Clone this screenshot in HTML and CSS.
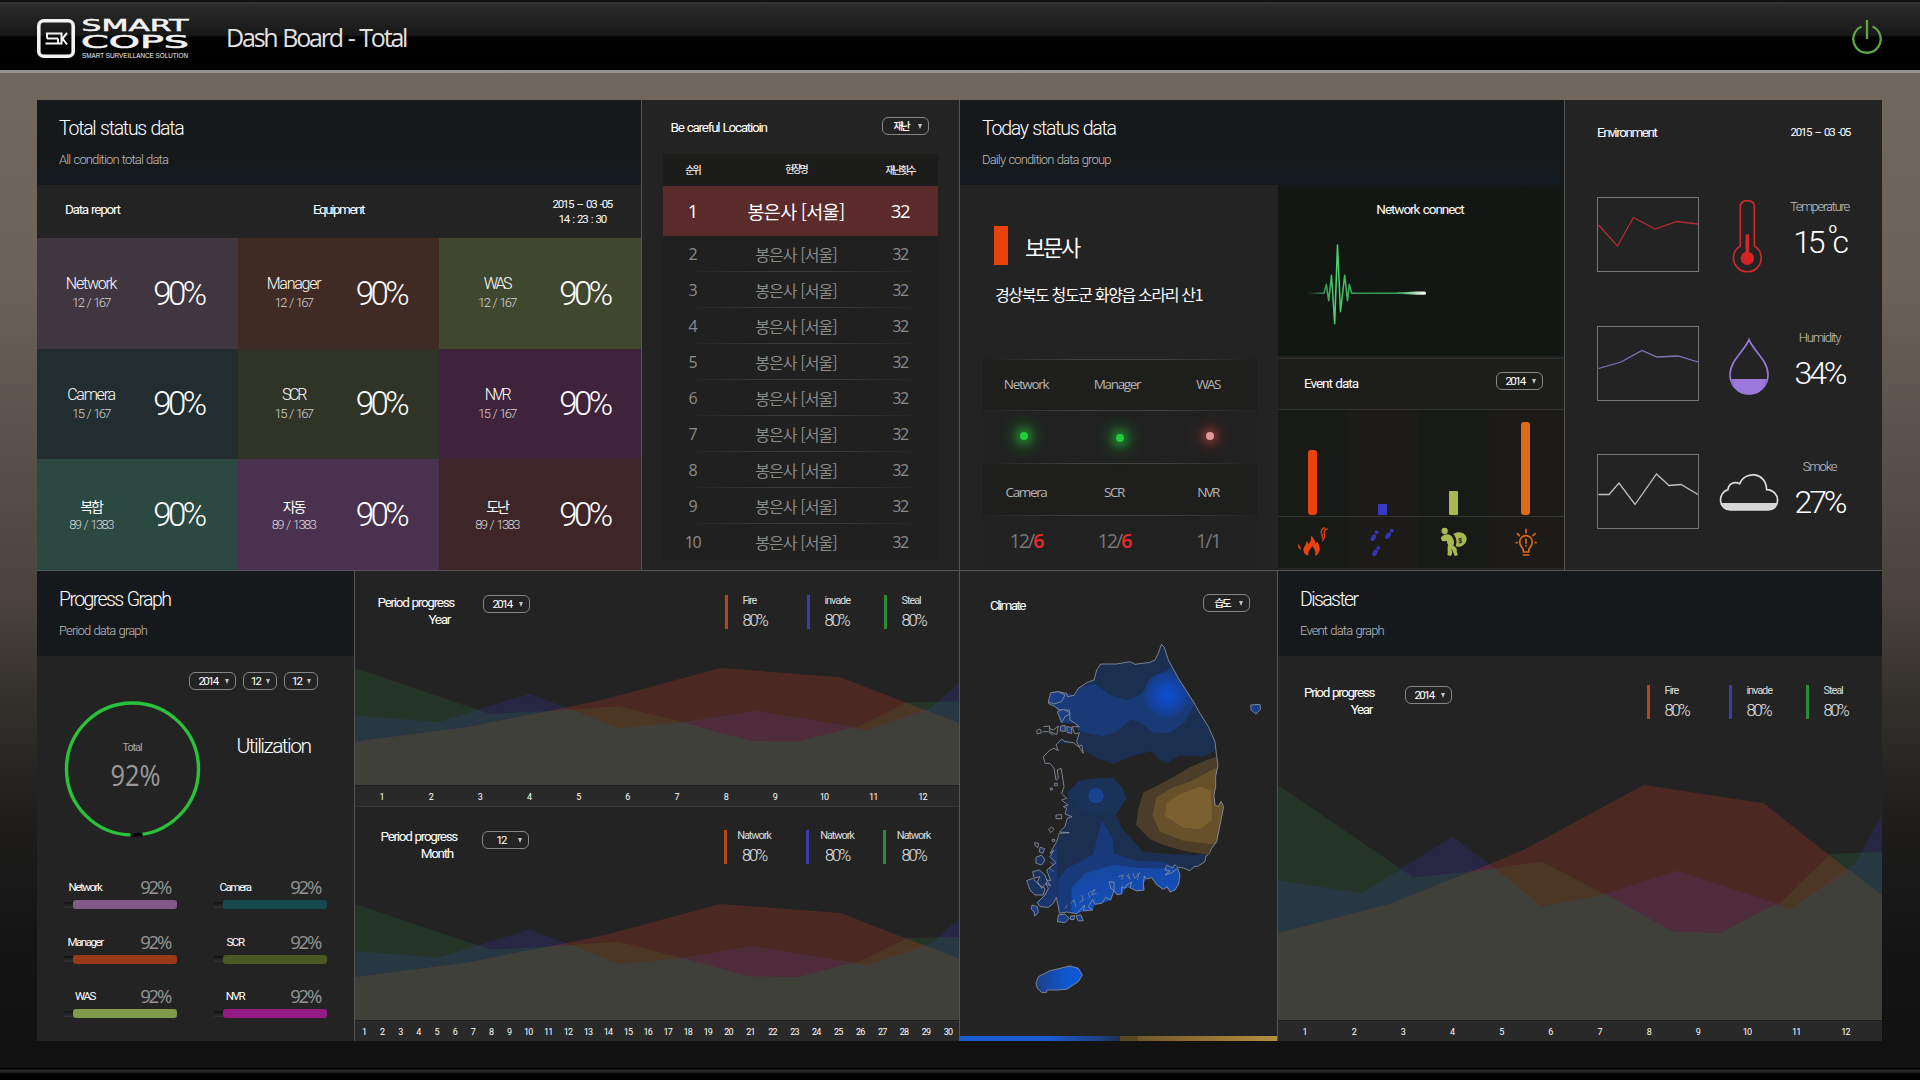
FILE: index.html
```html
<!DOCTYPE html>
<html lang="ko">
<head>
<meta charset="utf-8">
<title>Smart Cops - Dash Board</title>
<link rel="stylesheet" href="styles.css">
</head>
<body>
<header class="topbar">
  <svg class="logo" width="158" height="48" viewBox="0 0 158 48">
    <rect x="1.8" y="3.800" width="34.4" height="35.400" rx="5" fill="none" stroke="#f2f2f2" stroke-width="3.6"/>
    <path d="M9 16.500H24M10 21.500H21M8.500 26.500H23.500M10 16.500V21.500M21 21.500V26.500M24.500 15.500V27.500M30 16L25.500 21.500L30 27.500" fill="none" stroke="#f2f2f2" stroke-width="2"/>
    <text class="logo-a" x="44.500" y="13.500" textLength="107" lengthAdjust="spacingAndGlyphs">SMART</text>
    <text class="logo-b" x="44" y="31.200" textLength="108" lengthAdjust="spacingAndGlyphs">COPS</text>
    <text class="logo-c" x="45" y="41" textLength="106" lengthAdjust="spacingAndGlyphs">SMART SURVEILLANCE SOLUTION</text>
  </svg>
  <h1 class="page-title">Dash Board - Total</h1>
  <svg class="power" width="32" height="38" viewBox="-16 -20 32 38" fill="none" stroke="#5ea544" stroke-width="2.300">
    <path d="M-5.500 -12.500A13.700 13.700 0 1 0 5.500 -12.500M0 -19V0"/>
  </svg>
</header>

<main class="board">
  <div class="band">
    <section class="panel wide">
      <div class="head"><h2>Total status data</h2><p>All condition total data</p></div>
      <div class="report">
        <span class="lbl">Data report</span>
        <span class="lbl mid">Equipment</span>
        <span class="stamp">2015 – 03 -05<br>14 : 23 : 30</span>
      </div>
      <div class="tiles">
        <div class="tile t1"><div class="tl"><b>Network</b><i>12 / 167</i></div><strong>90%</strong></div>
        <div class="tile t2"><div class="tl"><b>Manager</b><i>12 / 167</i></div><strong>90%</strong></div>
        <div class="tile t3"><div class="tl"><b class="abbr">WAS</b><i>12 / 167</i></div><strong>90%</strong></div>
        <div class="tile t4"><div class="tl"><b>Camera</b><i>15 / 167</i></div><strong>90%</strong></div>
        <div class="tile t5"><div class="tl"><b class="abbr">SCR</b><i>15 / 167</i></div><strong>90%</strong></div>
        <div class="tile t6"><div class="tl"><b class="abbr">NVR</b><i>15 / 167</i></div><strong>90%</strong></div>
        <div class="tile t7"><div class="tl"><b class="ko">복합</b><i>89 / 1383</i></div><strong>90%</strong></div>
        <div class="tile t8"><div class="tl"><b class="ko">자동</b><i>89 / 1383</i></div><strong>90%</strong></div>
        <div class="tile t9"><div class="tl"><b class="ko">도난</b><i>89 / 1383</i></div><strong>90%</strong></div>
      </div>
    </section>

    <section class="panel narrow rank">
      <div class="rank-head"><span class="lbl careful">Be careful Locatioin</span><span class="select"><em class="ko">재난</em></span></div>
      <div class="table">
        <div class="tr th"><span>순위</span><span>현장명</span><span>재난횟수</span></div>
        <div class="tr top"><span>1</span><span>봉은사 [서울]</span><span>32</span></div>
        <div class="tr"><span>2</span><span>봉은사 [서울]</span><span>32</span></div>
        <div class="tr"><span>3</span><span>봉은사 [서울]</span><span>32</span></div>
        <div class="tr"><span>4</span><span>봉은사 [서울]</span><span>32</span></div>
        <div class="tr"><span>5</span><span>봉은사 [서울]</span><span>32</span></div>
        <div class="tr"><span>6</span><span>봉은사 [서울]</span><span>32</span></div>
        <div class="tr"><span>7</span><span>봉은사 [서울]</span><span>32</span></div>
        <div class="tr"><span>8</span><span>봉은사 [서울]</span><span>32</span></div>
        <div class="tr"><span>9</span><span>봉은사 [서울]</span><span>32</span></div>
        <div class="tr last"><span>10</span><span>봉은사 [서울]</span><span>32</span></div>
      </div>
    </section>

    <section class="panel wide">
      <div class="head"><h2>Today status data</h2><p class="loose">Daily condition data group</p></div>
      <div class="today">
        <div class="site">
          <div class="site-name"><span class="flag"></span><b>보문사</b></div>
          <p class="address">경상북도 청도군 화양읍 소라리 산1</p>
          <div class="devices">
            <div class="dr dh h1"><span>Network</span><span>Manager</span><span>WAS</span></div>
            <div class="dr h2"><span><u class="dot"></u></span><span><u class="dot low"></u></span><span><u class="dot red"></u></span></div>
            <div class="dr dh h3"><span>Camera</span><span>SCR</span><span>NVR</span></div>
            <div class="dr dv h4"><span>12/<b>6</b></span><span>12/<b>6</b></span><span>1/1</span></div>
          </div>
        </div>
        <div class="events">
          <div class="pulse">
            <span class="lbl net">Network connect</span>
            <svg width="286" height="130" viewBox="24 123 858 390">
              <defs><linearGradient id="trace" gradientUnits="userSpaceOnUse" x1="108" y1="0" x2="467" y2="0">
                <stop offset="0" stop-color="#1c6b34" stop-opacity="0"/><stop offset=".15" stop-color="#2f9c50"/><stop offset=".25" stop-color="#4fd873"/><stop offset=".42" stop-color="#2f9c50"/><stop offset=".78" stop-color="#35a458"/><stop offset="1" stop-color="#fff"/></linearGradient></defs>
              <path d="M108 339.500H162L169 313L176 362L184.500 286L194 431L202.500 195L211.500 395L224 286L232.500 362L238 313L245 339.500H400" fill="none" stroke="url(#trace)" stroke-width="4.500" stroke-linejoin="round"/>
              <path d="M380 337.500L440 334.500H463Q468 335 468 339.500T463 344.500H440L380 341.500Z" fill="url(#trace)"/>
            </svg>
          </div>
          <div class="event-head"><span class="lbl">Event data</span><span class="select"><em>2014</em></span></div>
          <div class="cols">
            <div class="col"><span class="bar fire"></span></div>
            <div class="col alt"><span class="bar step"></span></div>
            <div class="col"><span class="bar thief"></span></div>
            <div class="col alt"><span class="bar lamp"></span></div>
          </div>
          <div class="icons">
            <div class="col"><svg width="32" height="32" viewBox="82 1038 96 96" fill="#e8430f">
              <path d="M112 1126C100 1120 99 1107 105 1098C108 1093 111 1091 110 1084C115 1086 117 1090 117 1093C122 1086 126 1078 123 1067C133 1073 137 1084 138 1092C140 1090 141 1087 141 1084C150 1095 156 1113 142 1125C138 1129 136 1126 137 1122C139 1114 133 1104 127 1097C126 1106 117 1108 116 1119C116 1124 117 1128 112 1126Z"/>
              <path d="M174 1047C164 1047 163 1053 164 1061C165 1070 163 1078 158 1083M166 1043C156 1045 153 1053 156 1061C158 1067 159 1071 158 1076" fill="none" stroke="#e8430f" stroke-width="4"/>
              <path d="M85 1090C87 1098 95 1100 93 1110C86 1107 83 1098 85 1090Z"/></svg></div>
            <div class="col alt"><svg width="32" height="32" viewBox="298 1038 96 96" fill="#3434b4">
              <g id="foot"><ellipse cx="317" cy="1073" rx="7" ry="11" transform="rotate(32 317 1073)"/><circle cx="327" cy="1057" r="6"/></g>
              <g transform="translate(44 -6)"><ellipse cx="317" cy="1073" rx="7" ry="11" transform="rotate(40 317 1073)"/><circle cx="328" cy="1058" r="6"/></g>
              <g transform="translate(5 46)"><ellipse cx="317" cy="1072" rx="7" ry="11" transform="rotate(32 317 1072)"/><circle cx="327" cy="1058" r="6"/></g></svg></div>
            <div class="col"><svg width="32" height="32" viewBox="511 1038 96 96" fill="#a9b94f">
              <circle cx="531" cy="1053" r="9.500"/>
              <path d="M519 1074C526 1062 540 1060 549 1066C558 1074 562 1088 557 1097C566 1102 570 1108 567 1115L571 1126L561 1128C557 1118 556 1110 550 1106C554 1113 556 1120 549 1128L539 1125C542 1117 538 1104 541 1094C538 1090 538 1086 538 1083L524 1084Z"/>
              <path d="M557 1062C574 1050 598 1060 597 1077C596 1094 577 1106 564 1098C569 1086 566 1072 557 1062Z"/>
              <text class="cash" x="572" y="1088">$</text></svg></div>
            <div class="col alt"><svg width="32" height="32" viewBox="721 1038 96 96" fill="none" stroke="#df6a17" stroke-width="5" stroke-linecap="round">
              <path d="M761 1116V1110C759 1102 750 1098 750 1086A19 19 0 0 1 788 1086C788 1098 779 1102 777 1110V1116ZM761 1125H777M769 1078V1090M769 1097V1098M769 1048V1058M743 1061L749 1067M796 1061L790 1067M740 1088H742M797 1088H799"/></svg></div>
          </div>
        </div>
      </div>
    </section>

    <section class="panel env">
      <div class="env-head"><span class="lbl envl">Environment</span><span class="stamp">2015 – 03 -05</span></div>
      <div class="env-row">
        <svg class="spark" width="102" height="75" viewBox="0 0 102 75" fill="none"><rect x=".5" y=".5" width="101" height="74" stroke="#777"/><path d="M1.500 28L20.500 49L36.500 20.500L58 32L80 24.500L101 27" stroke="#b52c32" stroke-width="1.300"/></svg>
        <svg width="60" height="76" viewBox="477 318 180 228" fill="none" stroke="#cc2a2d" stroke-width="5">
          <path d="M541 465V348Q541 329 562 329T583 348V465A41.500 41.500 0 1 1 541 465Z"/><path d="M562 430V500" stroke-width="11"/><circle cx="562" cy="502" r="20" fill="#d42428" stroke="none"/></svg>
        <div class="reading r1"><i>Temperature</i><strong>15<span class="unit"><sup>o</sup>c</span></strong></div>
      </div>
      <div class="env-row">
        <svg class="spark" width="102" height="75" viewBox="0 0 102 75" fill="none"><rect x=".5" y=".5" width="101" height="74" stroke="#777"/><path d="M1.500 42.500L24 36L45 24.500L60 31L81 30L101 36" stroke="#8573c0" stroke-width="1.300"/></svg>
        <svg width="60" height="76" viewBox="477 702 180 228">
          <path d="M515 861H619C615 889 595 907 567 907S519 889 515 861Z" fill="#9a78dc"/>
          <path d="M567 743C555 775 510 805 510 848A57 58 0 0 0 624 848C624 805 579 775 567 743Z" fill="none" stroke="#9a78dc" stroke-width="5"/></svg>
        <div class="reading r2"><i>Humidity</i><strong>34%</strong></div>
      </div>
      <div class="env-row">
        <svg class="spark" width="102" height="75" viewBox="0 0 102 75" fill="none"><rect x=".5" y=".5" width="101" height="74" stroke="#777"/><path d="M1.500 40.500H12L22 29L38 50.500L59.500 20L72 31.500L84 30.500L101 40.500" stroke="#c4c4c4" stroke-width="1.300"/></svg>
        <svg width="60" height="76" viewBox="477 1089 180 228">
          <path d="M483 1236H652Q645 1257 624 1257H512Q488 1257 483 1236Z" fill="#d6d6d6"/>
          <path d="M512 1257C474 1257 472 1205 504 1196C505 1178 522 1170 539 1178C553 1140 618 1140 620 1196C664 1198 662 1257 624 1257Z" fill="none" stroke="#dcdcdc" stroke-width="5"/></svg>
        <div class="reading r3"><i>Smoke</i><strong>27%</strong></div>
      </div>
    </section>
  </div>

  <div class="band low">
    <section class="panel narrow">
      <div class="head"><h2 class="tight">Progress Graph</h2><p>Period data graph</p></div>
      <div class="pick"><span class="select"><em>2014</em></span><span class="select small"><em>12</em></span><span class="select small"><em>12</em></span></div>
      <div class="util">
        <svg width="138" height="138" viewBox="0 0 138 138" fill="none">
          <circle cx="68.500" cy="69" r="66" stroke="#2ac23a" stroke-width="3.400"/>
          <path d="M66.500 135A66 66 0 0 0 78.500 134.300" stroke="#050505" stroke-width="3.800"/>
          <text class="ring-l" x="68" y="51" text-anchor="middle">Total</text>
          <text class="ring-v" x="46.500" y="86" textLength="50" lengthAdjust="spacingAndGlyphs">92%</text>
        </svg>
        <b>Utilization</b>
      </div>
      <div class="meters">
        <div class="meter m1"><i>Network</i><b>92%</b><u></u></div>
        <div class="meter m2"><i>Camera</i><b>92%</b><u></u></div>
        <div class="meter m3"><i>Manager</i><b>92%</b><u></u></div>
        <div class="meter m4"><i>SCR</i><b>92%</b><u></u></div>
        <div class="meter m5"><i>WAS</i><b>92%</b><u></u></div>
        <div class="meter m6"><i>NVR</i><b>92%</b><u></u></div>
      </div>
    </section>

    <section class="panel wide">
      <div class="trend year">
        <div class="trend-head">
          <div class="caption">Period progress<span>Year</span></div><span class="select"><em>2014</em></span>
          <div class="legend"><div class="k1"><i>Fire</i><b>80%</b></div><div class="k2"><i>invade</i><b>80%</b></div><div class="k3"><i>Steal</i><b>80%</b></div></div>
        </div>
        <svg class="area" viewBox="0 0 1456 705" preserveAspectRatio="none">
          <defs><g id="waves">
            <path d="M0 285L201 325L421 155L521 250L636 365L781 330L961 257L1196 353L1231 375L1391 235L1456 90V705H0Z" fill="rgba(60,60,220,.18)"/>
            <path d="M0 0L326 277L461 260L636 230L781 323L951 440L1066 445L1211 355L1331 207L1456 200V705H0Z" fill="rgba(40,140,60,.17)"/>
            <path d="M0 445L270 357L400 292L511 237L600 190L881 0L1171 55L1325 207L1456 332V705H0Z" fill="rgba(220,65,30,.22)"/>
            <path d="M0 445L270 357L400 292L461 263L521 250L636 365L790 328L951 440L1066 445L1196 360L1231 375L1381 257L1456 332V705H0Z" fill="#40403b"/>
          </g></defs>
          <use href="#waves"/>
        </svg>
        <div class="axis months"><span>1</span><span>2</span><span>3</span><span>4</span><span>5</span><span>6</span><span>7</span><span>8</span><span>9</span><span>10</span><span>11</span><span>12</span></div>
      </div>
      <div class="trend month">
        <div class="trend-head">
          <div class="caption">Period progress<span>Month</span></div><span class="select"><em>12</em></span>
          <div class="legend centred"><div class="k1"><i>Natwork</i><b>80%</b></div><div class="k2"><i>Natwork</i><b>80%</b></div><div class="k3"><i>Natwork</i><b>80%</b></div></div>
        </div>
        <svg class="area" viewBox="0 0 1456 705" preserveAspectRatio="none"><use href="#waves"/></svg>
        <div class="axis days"><span>1</span><span>2</span><span>3</span><span>4</span><span>5</span><span>6</span><span>7</span><span>8</span><span>9</span><span>10</span><span>11</span><span>12</span><span>13</span><span>14</span><span>15</span><span>16</span><span>17</span><span>18</span><span>19</span><span>20</span><span>21</span><span>22</span><span>23</span><span>24</span><span>25</span><span>26</span><span>27</span><span>28</span><span>29</span><span>30</span></div>
      </div>
    </section>

    <section class="panel narrow climate">
      <div class="climate-head"><span class="lbl clim">Climate</span><span class="select"><em class="ko">습도</em></span></div>
      <svg class="map" width="317" height="422" viewBox="30 159 951 1266">
        <defs>
          <clipPath id="land"><path d="M634 253L643 262L655 300L685 355L730 425L750 460L775 500L795 545L800 590L804 615L797 650L797 680L792 705L795 735L805 740L813 724L821 740L812 785L800 845L785 865L770 885L765 905L745 918L720 932L700 924L683 922L690 945L686 972L675 990L660 996L650 984L635 986L620 974L605 953L590 955L580 970L582 990L560 993L540 983L525 985L515 1002L500 1004L492 992L482 1020L455 1030L435 1033L428 1050L400 1053L380 1061L350 1056L328 1060L325 1040L319 1012L310 1030L295 1042L270 1040L258 1028L285 1005L295 985L285 968L302 962L290 930L312 922L300 890L312 870L320 845L345 800L352 775L345 740L350 715L335 700L342 680L336 640L318 660L312 625L300 610L283 607L285 585L300 570L305 555L340 540L370 548L400 572L380 545L388 518L375 490L345 490L330 485L325 455L315 440L295 430L305 400L325 395L350 400L372 406L385 385L410 368L432 360L440 330L452 312L500 312L540 305L555 313L600 307L615 300L625 280Z"/></clipPath>
          <radialGradient id="peak"><stop offset="0" stop-color="#0a50d4"/><stop offset=".35" stop-color="#1049bd"/><stop offset="1" stop-color="#173c85"/></radialGradient>
          <linearGradient id="isle"><stop offset="0" stop-color="#1d3f86"/><stop offset=".7" stop-color="#0f58d4"/></linearGradient>
          <linearGradient id="south" x1="0" y1="0" x2=".4" y2="1"><stop offset="0" stop-color="#18479a"/><stop offset="1" stop-color="#1150c4"/></linearGradient>
        </defs>
        <g clip-path="url(#land)">
          <path d="M280 240H820V545L790 575L760 590L690 586L650 610L625 598L605 574L545 588L490 612L440 595L405 572L385 550H300V500H280Z" fill="#1b2f50"/>
          <path d="M280 400L435 372L480 405L530 420L570 405L600 370L625 345L665 322L735 430L705 485L660 518L610 518L575 490L545 478L500 515L460 529L410 520L350 495L280 500Z" fill="#193a76"/>
          <circle cx="650" cy="405" r="68" fill="url(#peak)"/>
          <path d="M345 730L362 690L385 664L430 656L490 653L515 680L529 715L497 765L520 810L580 875L660 882L770 885V1080H240V770Z" fill="#1b2f50"/>
          <path d="M350 700L385 664L430 656L490 653L515 680L529 715L497 765L400 760Z" fill="#1a3158"/>
          <circle cx="438" cy="707" r="23" fill="#194491"/>
          <path d="M455 780L487 835L492 882L560 902L640 905L720 940V1080H325V960L350 925L390 905L430 883L442 835Z" fill="#193a7a"/>
          <path d="M365 1080V985L405 940L490 915L570 925L690 925V1080Z" fill="url(#south)"/>
          <path d="M225 860H320L325 1070H225Z" fill="#19397a" opacity=".7"/>
          <path d="M810 588L770 600L720 622L650 662L580 698L565 745L558 795L600 838L640 855L700 872L770 884H840V588Z" fill="#4b3d29"/>
          <path d="M810 622L790 628L720 665L670 682L620 712L607 765L630 815L700 842L800 854L840 840V622Z" fill="#67512b"/>
          <path d="M750 680L783 692L786 780L750 808L700 803L645 768L650 728L690 703Z" fill="#7b6130"/>
        </g>
        <g fill="none" stroke="#8d93a2" stroke-width="2.500" stroke-linejoin="round">
          <path d="M634 253L643 262L655 300L685 355L730 425L750 460L775 500L795 545L800 590L804 615L797 650L797 680L792 705L795 735L805 740L813 724L821 740L812 785L800 845L785 865L778 880L768 888L765 905L745 918L732 920L720 932L700 924L683 922L674 914L668 924L650 916L645 930L660 932L645 945L665 938L683 925L690 945L686 972L675 990L660 996L652 980L640 988L620 974L605 953L590 957L583 948L580 970L582 990L560 993L540 983L545 966L530 975L525 985L515 980L515 1002L500 1004L492 992V966L478 965L482 985L492 992L482 1020L468 1012L455 1030L435 1033L428 1018L415 1040L428 1050L400 1053L404 1035L380 1061L350 1056L328 1060L325 1040L319 1012L310 1030L295 1042L270 1040L262 1028L285 1005L295 985L285 968L302 978L290 960L302 962L290 930L318 908L300 890L312 870L300 880L320 845L328 820L358 818L328 816L345 800L352 775L366 770L345 762L350 745L340 740L354 735L335 720L350 715L335 700L342 680L336 640L333 625L322 630L325 655L318 660L312 625L300 610L285 610L280 590L300 570L312 565L325 572L318 555L335 537L345 545L370 548L385 560L395 555L400 580L390 565L380 545L388 518L375 522L366 500L388 500L375 490L360 480L358 450L330 450L315 440L295 430L305 400L325 395L350 400L352 410L372 406L385 385L410 368L432 360L440 330L452 312L500 312L540 305L555 313L600 307L615 300L625 280Z"/>
          <path d="M505 950L520 945L515 960M530 945L540 958L535 940M548 940L555 955L568 938L562 960M420 1015L415 1000L435 988L425 1005L440 1000M362 1030L372 1020L378 1040M395 1005L400 1020L388 1028M345 1045L352 1035M300 905L310 915L298 925L312 935" stroke-width="2"/>
          <g fill="#193f86">
            <path d="M322 455L340 448L362 460L345 470L335 488ZM302 398L325 395L345 405L335 425L312 432L295 425ZM332 498L345 496L346 514L331 513ZM350 500L364 502L366 520L352 518Z"/>
            <path d="M325 1065L345 1062L358 1075L345 1088L322 1085ZM378 1068L392 1064L400 1082L385 1083ZM362 1068L374 1067L372 1079L361 1078ZM246 1035L262 1040L265 1058L254 1068L252 1055L244 1048Z"/>
            <path d="M258 892L275 885L285 900L275 915L258 910ZM248 935L268 930L285 945L292 965L275 985L262 965L270 950L252 955ZM230 962L248 955L268 975L285 985L280 1005L255 1005L240 990ZM270 862L284 866L278 880L268 876Z" fill="#1a3260"/>
            <path d="M902 435L930 433L932 448L918 462L903 450Z"/>
          </g>
          <path d="M260 512L270 507L275 518L262 522ZM280 500L298 498L300 515L320 524L325 498L310 510L298 505M278 515L295 515L310 526M254 848L266 850L264 862L256 858ZM318 765L335 764V776H318ZM296 808L305 801L312 808L302 818ZM301 684H307V690H301ZM314 670H322V677H314ZM307 838H314V844H307Z"/>
          <path d="M258 1270L265 1250L300 1232L360 1218L385 1225L397 1245L385 1265L350 1288L320 1290L292 1290L288 1298L275 1297L262 1285Z" fill="url(#isle)"/>
        </g>
      </svg>
      <div class="scale"></div>
    </section>

    <section class="panel disaster">
      <div class="head"><h2 class="tight">Disaster</h2><p>Event data graph</p></div>
      <div class="trend">
        <div class="trend-head">
          <div class="caption">Priod progress<span>Year</span></div><span class="select"><em>2014</em></span>
          <div class="legend"><div class="k1"><i>Fire</i><b>80%</b></div><div class="k2"><i>invade</i><b>80%</b></div><div class="k3"><i>Steal</i><b>80%</b></div></div>
        </div>
        <svg class="area" viewBox="0 0 1456 705" preserveAspectRatio="none"><use href="#waves"/></svg>
        <div class="axis months"><span>1</span><span>2</span><span>3</span><span>4</span><span>5</span><span>6</span><span>7</span><span>8</span><span>9</span><span>10</span><span>11</span><span>12</span></div>
      </div>
    </section>
  </div>
</main>
<footer class="foot"></footer>
</body>
</html>
```
FILE: styles.css
```css
*{box-sizing:border-box;margin:0;padding:0}
b,i,em,u,strong,h1,h2{font-weight:inherit;font-style:normal;text-decoration:none}
body{
  width:1920px;height:1080px;overflow:hidden;display:flex;flex-direction:column;
  background:#111 linear-gradient(#70675f 73px,#6c625a 280px,#5c534c 420px,#4a433d 600px,#33302c 700px,#1d1c1b 830px,#141414 950px,#111 1068px);
  color:#fff;font-family:Roboto,"Noto Sans CJK KR",sans-serif;font-weight:300;
}
svg{display:block;flex:none}
.ko{font-family:"Noto Sans CJK KR",sans-serif}

/* top bar */
.topbar{
  height:73px;flex:none;display:flex;align-items:flex-start;padding:17px 37px 0;
  border-bottom:3px solid #96928f;
  background:linear-gradient(#111 0,#111 2px,#3a3a3a 2px,#2b2b2b 5px,#181818 35px,#020202 37px,#000 70px);
}
.logo text{fill:#f2f2f2}
.logo-a{font:400 15.500px "DejaVu Sans",sans-serif;stroke:#f2f2f2;stroke-width:.500px}
.logo-b{font:400 18.500px "DejaVu Sans",sans-serif;stroke:#f2f2f2;stroke-width:.600px}
.logo-c{font:400 7.200px "Liberation Sans",sans-serif}
.page-title{font:400 25px/30px "Open Sans",sans-serif;letter-spacing:-2.200px;word-spacing:1.500px;color:#e2e2e2;margin:5px 0 0 31px;white-space:nowrap}
.power{margin:2px 0 0 auto}

/* board */
.board{width:1845px;height:941px;margin:27px 0 0 37px;flex:none}
.band{display:flex;height:471px;border-bottom:1px solid #555}
.band.low{height:470px;border-bottom:0}
.panel{background:#232323;border-right:1px solid #555;flex:none;display:flex;flex-direction:column}
.wide{width:605px}
.narrow{width:318px}
.env{width:317px;border-right:0}
.disaster{width:604px;border-right:0}
.head{height:85px;flex:none;padding:17px 0 0 22px;background:linear-gradient(#16191b 70%,#131a20)}
.low .head{background:#16191b}
.head h2{font-size:19.500px;line-height:24px;letter-spacing:-1.250px;font-weight:350;word-spacing:1px}
.head h2.tight{letter-spacing:-1.600px}
.head p{font-size:13px;line-height:18px;margin-top:10px;letter-spacing:-.850px;word-spacing:.800px;color:#bdbdbd}
.lbl{font-size:13.500px;line-height:18px;letter-spacing:-1.250px;word-spacing:1px;font-weight:400;white-space:nowrap}
.stamp{font-size:11.500px;line-height:15px;letter-spacing:-1.300px;word-spacing:1.800px;font-weight:400;text-align:center;white-space:pre-line}

.select{
  width:47px;height:18px;flex:none;border:1px solid #868686;border-radius:6px;
  display:flex;align-items:center;padding:0 6px 0 1px;
}
.select.small{width:34px}
.select em{flex:1;text-align:center;font-size:11.500px;line-height:16px;letter-spacing:-1.700px;font-weight:400}
.select em.ko{font-size:10.500px;letter-spacing:-2.200px;font-weight:500;padding-bottom:1px}
.select::after{content:"";border:2.500px solid transparent;border-top:5px solid #c4c4c4;border-bottom:0}

/* total status */
.report{height:53px;display:grid;grid-template-columns:201px 201px 1fr;padding:12px 29px 0 0;flex:none}
.report .lbl{padding-left:28px;padding-top:3px}
.report .mid{padding-left:0;text-align:center;letter-spacing:-1.500px}
.report .stamp{justify-self:end}
.tiles{flex:1;display:grid;grid-template-columns:201px 201px 1fr;grid-template-rows:repeat(3,1fr)}
.tile{display:flex;align-items:center;padding-top:1px}
.tile:nth-child(3n+2){padding-left:1.500px}
.tile:nth-child(3n){padding-left:4px}
.tl{width:108px;text-align:center;display:flex;flex-direction:column}
.tl b{font-size:16px;line-height:20px;letter-spacing:-1.250px;font-weight:350}
.tl b.abbr{letter-spacing:-2.300px}
.tl b.ko{font-size:14px;letter-spacing:-2.200px;font-weight:400}
.tl i{font-size:13px;line-height:20px;letter-spacing:-1.600px;word-spacing:1.600px;color:#d8d7d7;margin-top:-1px}
.tile strong{width:70px;text-align:center;font-size:33px;line-height:36px;letter-spacing:-3.500px;padding-right:3px;white-space:nowrap}
.t1{background:#3f3640}.t2{background:#402a24}.t3{background:#40472f}
.t4{background:#212d2e}.t5{background:#2f3426}.t6{background:#3f223b}
.t7{background:#2b4841}.t8{background:#4b3150}.t9{background:#3e2528}

/* ranking */
.rank-head{display:flex;justify-content:space-between;padding:17px 30px 0 28.500px}
.rank-head .lbl{padding-top:1px}
.table{margin:18px 0 0 21px;width:275px}
.tr{
  display:grid;grid-template-columns:59px 148px 60px;align-items:center;text-align:center;height:36px;
  font:400 16px/24px "Open Sans","Noto Sans CJK KR",sans-serif;color:#8c8c8c;letter-spacing:-1.300px;
  background:#202020 linear-gradient(90deg,transparent 8%,#3b3b3b 40%,#3b3b3b 60%,transparent 95%) bottom/100% 1px no-repeat;
}
.tr span:nth-child(2){font-family:"Noto Sans CJK KR",sans-serif;letter-spacing:-.900px;line-height:20px;padding-bottom:1px;white-space:nowrap}
.tr.last{background-image:none}
.tr.th{height:32px;background:#1c1d1b;color:#eee;font:500 10px/20px "Noto Sans CJK KR",sans-serif;letter-spacing:-1.900px;padding-bottom:1px}
.tr.th span:nth-child(2){letter-spacing:-2px}
.tr.top{height:50px;background:#5b2a2a;color:#fff;font-size:18.500px}
.tr.top span:nth-child(2){letter-spacing:-.750px;font-weight:400}

/* today */
.today{display:flex;flex:1}
.site{width:318px;padding:41px 0 0 23px}
.site-name{display:flex;align-items:center;padding-left:11px}
.flag{width:14px;height:39px;background:#e8430b}
.site-name b{font:400 22px/30px "Noto Sans CJK KR",sans-serif;letter-spacing:-2.300px;margin-left:17px}
.address{font:400 16px/24px "Noto Sans CJK KR",sans-serif;letter-spacing:-1.350px;margin:17px 0 0 12px;white-space:nowrap}
.devices{width:274px;margin-top:53px}
.dr{
  display:grid;grid-template-columns:86px 96px 86px;align-items:center;justify-items:center;
  background:#212121 linear-gradient(90deg,transparent,#444 35%,#444 65%,transparent) top/100% 1px no-repeat;
}
.dh{background-color:#1e1e1d;font:400 13.500px/20px "Open Sans",sans-serif;letter-spacing:-1.350px;color:#b5b5b5}
.dh span:last-child{letter-spacing:-1.700px}
.h1{height:51px;padding-bottom:1px}.h2{height:53px}.h3{height:52px;padding-top:5px}.h4{height:53px}
.h3 span:nth-child(2),.h4 span:nth-child(2){margin-left:-6px}
.dv{font:400 19.500px/24px "Open Sans",sans-serif;letter-spacing:-1.870px;color:#777;padding-bottom:1px}
.dv b{color:#ea2a2e;font-weight:600}
.dot{display:block;width:8px;height:8px;margin:-1px 0 0 -5px;border-radius:50%;background:#22cc3c;box-shadow:0 0 7px 5px rgba(32,130,46,.75),0 0 14px 11px rgba(30,100,38,.42)}
.dot.low{margin:2px 0 0 6px}
.dot.red{background:#e0989a;margin:-1px 0 0 4px;box-shadow:0 0 7px 4px rgba(130,55,55,.75),0 0 13px 9px rgba(100,42,42,.4)}
.events{width:286px;display:flex;flex-direction:column}
.pulse{height:171px;background:#131713;text-align:center;padding:15px 2px 0 0}
.pulse .net{display:block;letter-spacing:-1.050px;height:21px}
.event-head{height:52px;margin-top:2px;padding:13px 21px 0 26px;display:flex;justify-content:space-between;background:#1d1e1c;border-top:1px solid #2e2f2c;border-bottom:1px solid #33342e}
.event-head .lbl{padding-top:2px;letter-spacing:-1px}
.cols,.icons{display:grid;grid-template-columns:69px 71px 71px 1fr}
.cols{height:107px;border-bottom:1px solid #33352f}
.icons{height:51px}
.col{display:flex;justify-content:center;align-items:flex-end;background:#171a15}
.col.alt{background:#1c1b17}
.col:last-child{padding-right:2px}
.cols .col{padding-bottom:1px}
.icons .col{align-items:center;padding-bottom:1px}
.bar{width:9px;border-radius:3px}
.bar.fire{height:65px;background:#e8430f}
.bar.step{height:11px;background:#383ac6;border-radius:1px}
.bar.thief{height:24px;background:#a9b94f;border-radius:1px}
.bar.lamp{height:93px;background:#df6a17}
.cash{font:700 21px "Liberation Sans",sans-serif;fill:#1b1f12}

/* environment */
.env-head{display:flex;justify-content:space-between;padding:23px 32px 0 32px;height:97px;flex:none}
.env-head .stamp{padding-top:2px}
.envl{letter-spacing:-1.450px}
.env-row{height:128.500px;flex:none;padding-left:31.500px;display:flex;align-items:flex-start}
.env-row:last-child{height:110px}
.spark{margin-right:20px}
.reading{width:82px;text-align:center;display:flex;flex-direction:column;padding-top:1px}
.reading i{font-size:13px;line-height:18px;letter-spacing:-1.230px;color:#c4c4c4}
.reading strong{font-size:32px;line-height:32px;margin-top:10px;letter-spacing:-3.100px}
.r2{padding-top:3px}.r3{padding-top:4px}
.unit{position:relative;margin-left:10px}
.unit sup{position:absolute;left:-4px;top:-5px;font-size:15px;line-height:20px;font-weight:400;letter-spacing:0}

/* progress */
.pick{display:flex;justify-content:flex-end;gap:7px;padding:16px 36px 0 0}
.util{display:flex;padding:10px 0 0 27px}
.util>b{font-size:21px;line-height:24px;letter-spacing:-1.550px;font-weight:350;margin:34px 0 0 34.500px}
.ring-l{font-size:11px;letter-spacing:-1.100px;fill:#a5a5a5;font-weight:400}
.ring-v{font:400 29px "Open Sans",sans-serif;fill:#9b9b9b}
.meters{display:grid;grid-template-columns:150px 113px;row-gap:21.500px;padding:38px 0 0 27px}
.meter{width:113px;display:grid;grid-template-columns:42px 1fr;align-items:center}
.meter i{font-size:11.500px;line-height:20px;letter-spacing:-1.450px;text-align:center;font-weight:400}
.meter b{font:400 18.500px/22px "Open Sans",sans-serif;letter-spacing:-2.230px;color:#959595;text-align:right;padding-right:7px}
.meter u{grid-column:1/-1;height:9px;margin-top:2px;display:flex;background:linear-gradient(#111,#333) left/11px 6px no-repeat}
.meter u::after{content:"";flex:1;margin-left:9px;height:9px;border-radius:3px;background:var(--c)}
.m1{--c:#83598a}.m2{--c:#16494f}.m3{--c:#9a3916}.m4{--c:#4b5a22}.m5{--c:#7f9b4a}.m6{--c:#931b85}

/* trends */
.trend{display:flex;flex-direction:column}
.trend-head{height:97px;display:flex;flex:none;padding-top:23px}
.caption{width:78px;margin-left:21px;font-size:13.500px;line-height:17px;letter-spacing:-1.300px;word-spacing:1px;font-weight:400;white-space:nowrap;text-align:right}
.caption span{display:block;padding-right:4px}
.trend .select{margin:1px 0 0 29px}
.legend{margin:1px -1px 0 auto;display:grid;grid-template-columns:82px 77px 76px;height:34px}
.legend div{border-left:3px solid #b9431c;padding-left:14.500px;display:flex;flex-direction:column}
.legend .k2{border-color:#3b3bb4}.legend .k3{border-color:#2a8c3a}
.legend i{font-size:11px;line-height:12px;letter-spacing:-1.100px;color:#ddd;font-weight:400}
.legend b{font-size:16.500px;line-height:16px;margin-top:6px;letter-spacing:-2.200px;color:#e6e6e6;font-weight:350}
.legend.centred div{padding:0 29px 0 4px;text-align:center}
.legend.centred .k2,.legend.centred .k3{padding-right:22px}
.area{width:100%;height:117px}
.axis{height:21px;background:#292929;font-size:9px;line-height:22px;letter-spacing:-.800px;display:flex;border-top:1px solid #1e1e1e;font-weight:400}
.months{padding:0 12px 0 2px}
.months span{flex:1;text-align:center}
.days span{flex:18.200 0 0;text-align:center}
.days span:nth-child(n+10){flex-grow:20}
.days span:nth-child(n+20){flex-grow:22}
.year{border-bottom:1px solid #383838}
.month .trend-head{padding-top:21px}
.month .caption{margin-left:25px;width:77px}
.month .select{margin:3px 0 0 25px}
.month .legend{margin-top:2px;margin-right:0}
.month .area{height:116px}
.disaster .trend-head{height:129px;padding-top:28px}
.disaster .caption{margin-left:24px;width:72px;letter-spacing:-1.350px}
.disaster .caption span{padding-right:2px}
.disaster .select{margin:2px 0 0 31px}
.disaster .legend{margin-right:0}
.disaster .area{height:235px}

/* climate */
.climate-head{display:flex;justify-content:space-between;padding:24px 27px 0 30px;height:42px}
.climate-head .lbl{padding-top:1px}
.climate-head .select{margin-top:-1px}
.clim{letter-spacing:-1.600px}
.scale{height:5px;margin-top:1px;background:linear-gradient(90deg,#1a5bd0 0,#1a5bd0 28%,#1b4fa8 36%,#1d4184 44%,#1c2f50 50.400%,#5b4722 50.400%,#5b4722 56%,#72592a 56%,#8a6c30 72%,#b48f40)}

.foot{height:12px;margin-top:auto;flex:none;background:linear-gradient(#000 0,#000 1px,#2a2a2a 2px,#222 4px,#000 6px)}
```
